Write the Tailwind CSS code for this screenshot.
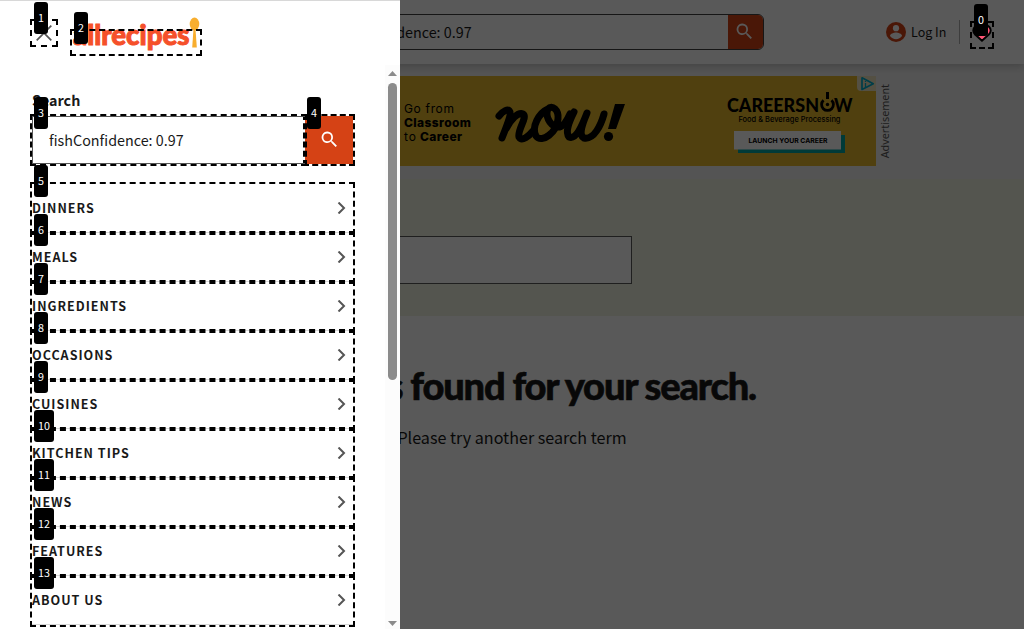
<!DOCTYPE html>
<html lang="en">
<head>
<meta charset="utf-8">
<title>Allrecipes</title>
<script src="https://cdn.jsdelivr.net/npm/@tailwindcss/browser@4"></script>
</head>
<body class="relative h-[629px] w-[1024px] overflow-hidden bg-white font-['Noto_Sans_CJK_SC','Noto_Sans',sans-serif] text-[#191919]">
<!-- Page -->
<div class="flex h-full flex-col">
  <header class="relative z-10 flex h-16 shrink-0 items-center bg-white pr-[30px] shadow-[0_2px_8px_rgba(0,0,0,0.2)]">
    <div class="ml-[240px] flex h-9 w-[524px] overflow-hidden rounded-md border border-[#404040]">
      <div class="flex-1 pl-[96px] text-[14.33px] leading-[34px] whitespace-nowrap">fishConfidence: 0.97</div>
      <div class="w-[35px] bg-[#d54215] pt-[6px] pl-[6px]">
        <svg class="size-[21px]" viewBox="0 0 24 24" fill="#fff"><path d="M15.500 14h-.8l-.3-.3A6.500 6.500 0 1 0 13.700 14.400l.3.3v.8l5 5 1.500-1.500-5-5zm-6 0a4.500 4.500 0 1 1 0-9 4.500 4.500 0 0 1 0 9z"/></svg>
      </div>
    </div>
    <div class="ml-[122px] flex items-center">
      <svg class="size-5" viewBox="0 0 20 20"><circle cx="10" cy="10" r="10" fill="#d54215"/><circle cx="10" cy="6.200" r="3.100" fill="#fff"/><path d="M4 14c0-2.200 4-3.400 6-3.400s6 1.200 6 3.400c-1.300 2-3.600 3.200-6 3.200S5.300 16 4 14z" fill="#fff"/></svg>
      <span class="ml-[5px] w-9 text-[12.54px] leading-5 whitespace-nowrap">Log In</span>
      <span class="ml-3 h-6 w-px bg-[#b0b0b0]"></span>
    </div>
  </header>
  <section class="flex h-[115px] shrink-0 justify-center bg-[#f0f0f0] pt-3">
    <div class="relative flex h-[90px] w-[728px] bg-[#e5b72c] text-black">
      <svg class="h-[90px] w-[728px]" viewBox="148 76 728 90">
        <g font-family="Inter" font-size="12">
          <text x="404" y="113" textLength="50">Go from</text>
          <text x="404" y="127" font-weight="800" textLength="67">Classroom</text>
          <text x="404" y="141" textLength="12">to</text>
          <text x="420" y="141" font-weight="800" textLength="42">Career</text>
        </g>
        <g fill="none" stroke="#000" stroke-width="7" stroke-linecap="round" stroke-linejoin="round">
          <path d="M499 116c4-5 9-8 11-4 1 3-4 16-8 26M506 129c5-10 12-17 17-15 5 3-6 16-4 23 3 5 10-1 14-6"/>
          <path d="M548 109c-9 4-17 18-12 27 6 8 21-4 22-17 1-9-6-15-10-10-3 6 1 16 9 18 5 1 9-4 13-13"/>
          <path d="M574 112c-5 10-9 20-5 25 7 3 13-11 18-24-5 12-9 22-3 25 10 2 17-13 20-24"/>
        </g>
        <path d="M615 104h10l-9 25h-8z"/><circle cx="608.500" cy="136.500" r="4.600"/>
        <g font-family="Lato" font-weight="900" font-size="19.500">
          <text x="727" y="112" textLength="92" lengthAdjust="spacingAndGlyphs">CAREERSN</text>
          <text x="834" y="112" textLength="18.500" lengthAdjust="spacingAndGlyphs">W</text>
        </g>
        <path d="M823.500 100.200a5.900 5.900 0 1 0 8 0" fill="none" stroke="#000" stroke-width="2.800"/>
        <path d="M826 92h3v7h-3z"/>
        <circle cx="827.500" cy="104.500" r="1.700"/>
        <text x="738.500" y="122" font-family="Inter" font-weight="500" font-size="7.500" textLength="102" lengthAdjust="spacingAndGlyphs">Food &amp; Beverage Processing</text>
        <path fill="#00a5a0" d="M738 135h107v18H738z"/>
        <path fill="#fff" d="M734 131h107v18.500H734z"/>
        <text x="748.500" y="142.500" font-family="Inter" font-weight="700" font-size="6.800" textLength="79" lengthAdjust="spacingAndGlyphs">LAUNCH YOUR CAREER</text>
        <path fill="#f0e6c0" d="M857 76h19v15h-15a4 4 0 0 1-4-4z"/>
        <path d="M862 77.800v11.700l11.300-5.800z" fill="none" stroke="#00aecd" stroke-width="1.700" stroke-linejoin="round"/>
        <path d="M865.500 83v4M865.500 81v1" stroke="#00aecd" stroke-width="1.300"/>
      </svg>
      <div class="absolute top-[8px] left-[729px] w-4 rotate-180 font-['Noto_Sans'] text-[10.8px] leading-4 text-[#555] [writing-mode:vertical-rl]">Advertisement</div>
    </div>
  </section>
  <section class="h-[137px] shrink-0 bg-[#f1f2e2] pt-[57px] pl-[240px]">
    <div class="h-12 w-[392px] border border-[#5a5a5a] bg-white"></div>
  </section>
  <main class="flex flex-1 flex-col bg-white pt-[42px]">
    <h1 class="mr-[268px] text-right font-[Lato] text-[38px] leading-[54px] font-black tracking-[-1.15px] whitespace-nowrap [-webkit-text-stroke:0.6px_#191919]">No results found for your search.</h1>
    <p class="mt-[11px] text-center text-[16.12px] leading-7">Please try another search term</p>
  </main>
</div>
<div class="absolute inset-0 z-20 bg-black/65"></div>

<!-- Drawer -->
<aside class="absolute inset-y-0 left-0 z-30 flex w-[400px] flex-col border-t border-[#d8d8d8] bg-white">
  <div class="flex h-16 shrink-0 items-start pt-5 pl-8">
    <div class="relative size-6 before:absolute before:-inset-[2px] before:border-2 before:border-dashed before:border-black">
      <svg class="size-6" viewBox="0 0 24 24" stroke="#555" stroke-width="1.700"><path d="M4.700 4.700l14.600 14.600M19.300 4.700L4.700 19.300"/></svg>
      <span class="absolute -top-[19px] left-[2px] rounded-[3px] bg-black px-1 text-[10.75px] leading-8 text-white">1</span>
    </div>
    <div class="relative mt-[10px] ml-4 h-[23px] w-32 before:absolute before:-inset-[2px] before:border-2 before:border-dashed before:border-black">
      <svg class="absolute -top-[15px] left-0 -z-10 h-10 w-[130px]" viewBox="72 16 130 40">
        <text x="73" y="44.500" font-family="Lato" font-weight="900" font-size="28" fill="#f5502a" stroke="#f5502a" stroke-width="1" textLength="116.500" lengthAdjust="spacingAndGlyphs">allrecipes</text>
        <ellipse cx="194.500" cy="24" rx="4.800" ry="6.500" fill="#f8ae2e"/><path d="M193.500 29h2l1.300 18.500h-4.600z" fill="#f8ae2e"/>
      </svg>
      <span class="absolute -top-[19px] left-[2px] rounded-[3px] bg-black px-1 text-[10.75px] leading-8 text-white">2</span>
    </div>
  </div>
  <div class="flex min-h-0 flex-1">
    <div class="w-[385px] shrink-0 pt-6 pl-8">
      <div class="h-[27px] text-[14.33px] leading-[22px] font-bold">Search</div>
      <div class="flex h-12 w-[321px]">
        <div class="relative z-10 w-[273px] border border-r-0 border-[#555] pl-4 text-[14.33px] leading-[45px] before:absolute before:-inset-[3px] before:-right-[2px] before:border-2 before:border-dashed before:border-black">fishConfidence: 0.97
          <span class="absolute -top-[20px] left-px rounded-[3px] bg-black px-1 text-[10.75px] leading-8 text-white">3</span>
        </div>
        <div class="relative w-12 bg-[#d54215] before:absolute before:-inset-[2px] before:border-2 before:border-dashed before:border-black">
          <svg class="mt-[13px] ml-[13.500px] size-[21px]" viewBox="0 0 24 24" fill="#fff"><path d="M15.500 14h-.8l-.3-.3A6.500 6.500 0 1 0 13.700 14.400l.3.3v.8l5 5 1.500-1.500-5-5zm-6 0a4.500 4.500 0 1 1 0-9 4.500 4.500 0 0 1 0 9z"/></svg>
          <span class="absolute -top-[19px] left-[2px] rounded-[3px] bg-black px-1 text-[10.75px] leading-8 text-white">4</span>
        </div>
      </div>
      <nav id="menu" class="mt-5 w-[321px] text-[12.54px] font-bold tracking-[1px]"></nav>
    </div>
    <div class="flex w-[15px] flex-col items-center bg-[#fcfcfc] pt-[6px]">
      <svg class="h-[5px] w-[9px]" viewBox="0 0 9 5"><path d="M4.500 0L9 5H0z" fill="#8b8b8b"/></svg>
      <div class="mt-[7px] h-[297px] w-[9px] rounded-full bg-[#8b8b8b]"></div>
      <svg class="mt-auto mb-[3px] h-[5px] w-[9px]" viewBox="0 0 9 5"><path d="M4.500 5L9 0H0z" fill="#8b8b8b"/></svg>
    </div>
  </div>
</aside>

<!-- Saved items marker -->
<div class="absolute top-[23px] left-[972px] z-40 h-6 w-5 before:absolute before:-inset-[2px] before:border-2 before:border-dashed before:border-black">
  <svg class="h-6 w-5" viewBox="0 0 20 24"><path d="M10 17.800L3.200 11.500c-5-5.500 2-12.500 6.800-8 4.800-4.500 11.800 2.500 6.800 8z" fill="#ff5575" stroke="#000" stroke-width="1.900"/></svg>
  <span class="absolute -top-[19px] left-[2px] rounded-[3px] bg-black px-1 text-[10.75px] leading-8 text-white">0</span>
</div>
<script>
document.getElementById('menu').innerHTML = ['DINNERS','MEALS','INGREDIENTS','OCCASIONS','CUISINES','KITCHEN TIPS','NEWS','FEATURES','ABOUT US'].map((t, i) => `
<div class="relative flex h-[49px] items-center justify-between border-b border-[#d8d8d8] pr-[6px] before:absolute before:-inset-[2px] before:-bottom-[3px] before:border-2 before:border-dashed before:border-black"><span class="leading-[48px]">${t}</span>
<svg class="h-3 w-[12px]" viewBox="0 0 12 12" fill="none" stroke="#555" stroke-width="2"><path d="M3.500 .5L9 6 3.500 11.500"/></svg>
<span class="absolute -top-[19px] left-[2px] z-10 rounded-[3px] bg-black px-1 text-[10.75px] leading-8 font-normal tracking-normal text-white">${i + 5}</span></div>`).join('');
</script>
</body>
</html>
